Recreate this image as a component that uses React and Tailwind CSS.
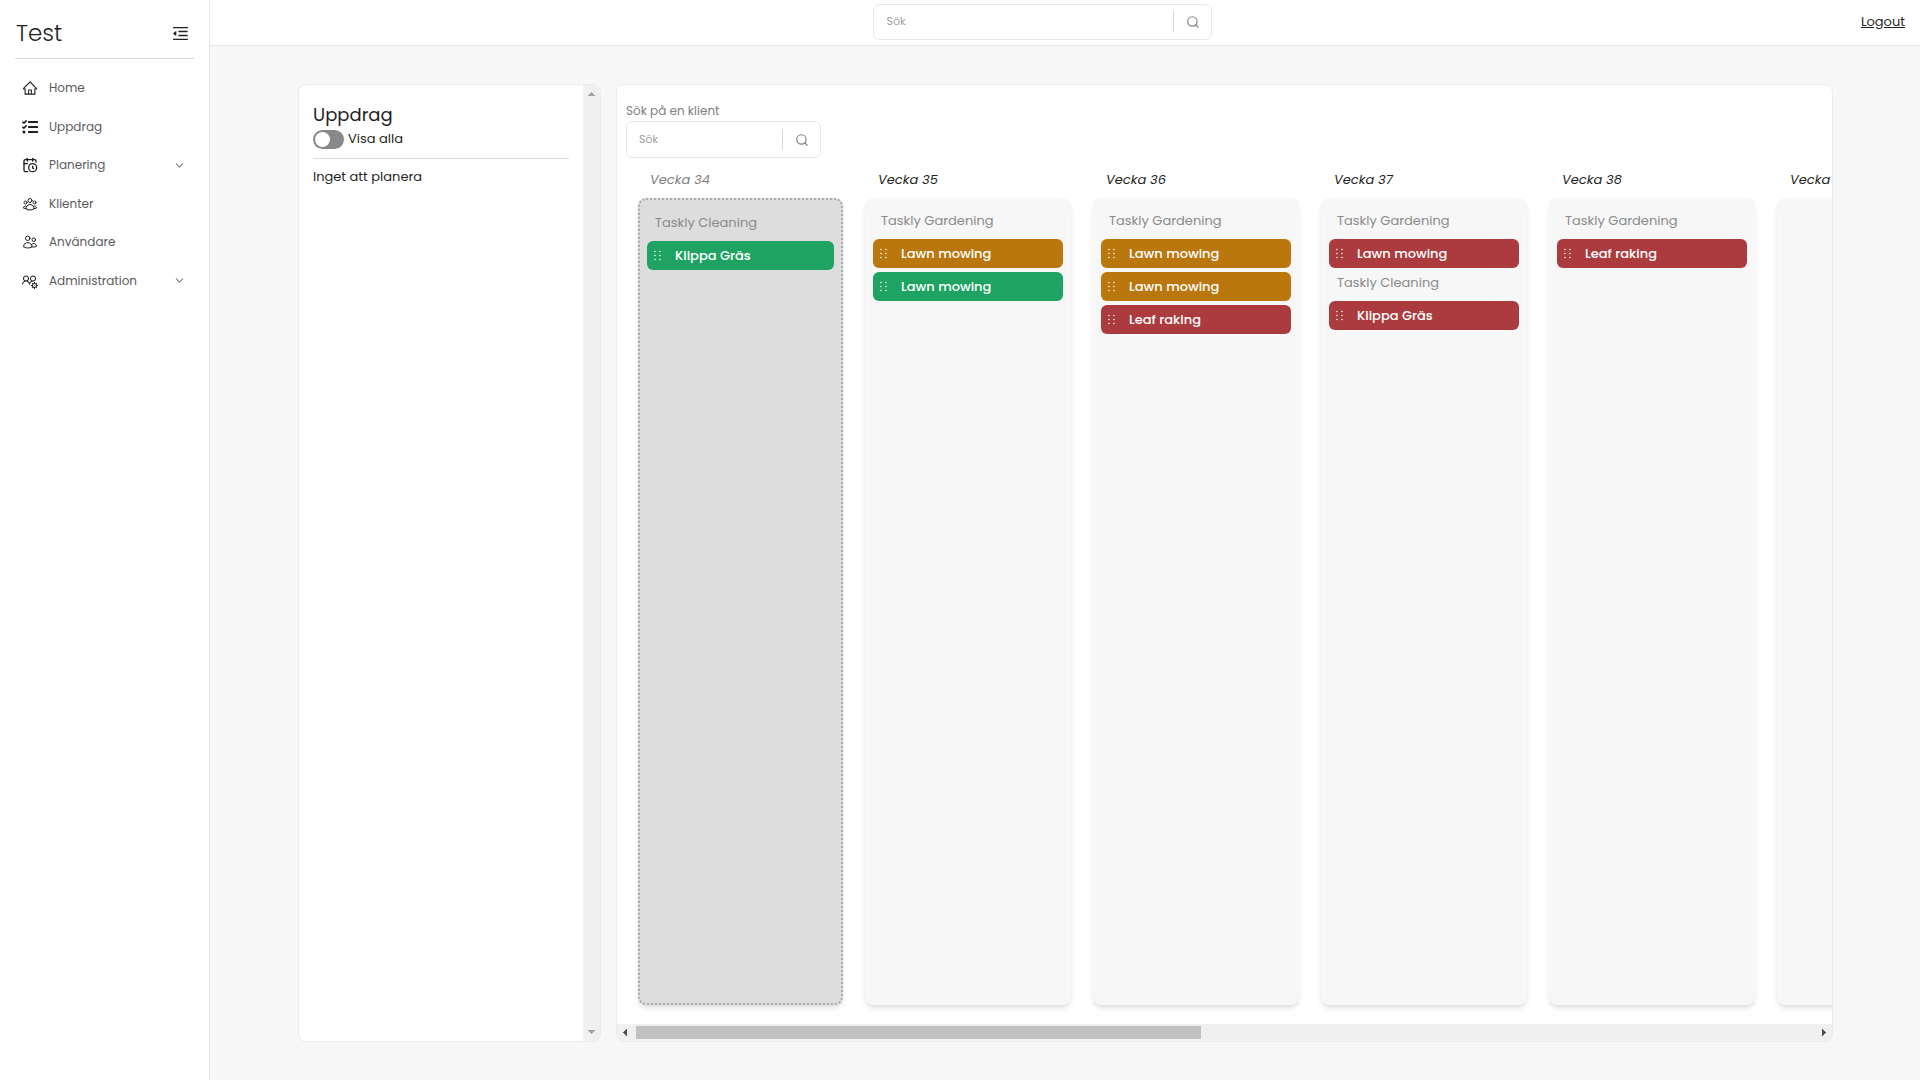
import { useState } from 'react';
import { AiOutlineHome, AiOutlineMenuFold } from 'react-icons/ai';
import { FaTasks } from 'react-icons/fa';
import { HiOutlineUserGroup, HiOutlineUsers } from 'react-icons/hi2';
import { LiaUsersCogSolid } from 'react-icons/lia';
import { LuCalendarClock } from 'react-icons/lu';
import { FiChevronDown, FiSearch } from 'react-icons/fi';
import clsx from 'clsx';

const links = [
  { label: 'Home', icon: AiOutlineHome },
  { label: 'Uppdrag', icon: FaTasks },
  { label: 'Planering', icon: LuCalendarClock, sub: true },
  { label: 'Klienter', icon: HiOutlineUserGroup },
  { label: 'Användare', icon: HiOutlineUsers },
  { label: 'Administration', icon: LiaUsersCogSolid, sub: true },
];

const colors = {
  green: 'bg-[#1ea362]',
  amber: 'bg-[#b9770e]',
  red: 'bg-[#ab3b3e]',
};

const weeks = [
  {
    week: 34,
    past: true,
    groups: [{ team: 'Taskly Cleaning', tasks: [{ name: 'Klippa Gräs', color: 'green' }] }],
  },
  {
    week: 35,
    groups: [
      {
        team: 'Taskly Gardening',
        tasks: [
          { name: 'Lawn mowing', color: 'amber' },
          { name: 'Lawn mowing', color: 'green' },
        ],
      },
    ],
  },
  {
    week: 36,
    groups: [
      {
        team: 'Taskly Gardening',
        tasks: [
          { name: 'Lawn mowing', color: 'amber' },
          { name: 'Lawn mowing', color: 'amber' },
          { name: 'Leaf raking', color: 'red' },
        ],
      },
    ],
  },
  {
    week: 37,
    groups: [
      { team: 'Taskly Gardening', tasks: [{ name: 'Lawn mowing', color: 'red' }] },
      { team: 'Taskly Cleaning', tasks: [{ name: 'Klippa Gräs', color: 'red' }] },
    ],
  },
  {
    week: 38,
    groups: [{ team: 'Taskly Gardening', tasks: [{ name: 'Leaf raking', color: 'red' }] }],
  },
  { week: 39, groups: [] },
];

function SearchBox({ id, className }) {
  return (
    <form
      role="search"
      onSubmit={(e) => e.preventDefault()}
      className={clsx('flex items-center rounded-md border border-[#e8e8e8] bg-white pl-3', className)}
    >
      <input
        id={id}
        aria-label="Sök"
        placeholder="Sök"
        className="w-full min-w-0 flex-1 text-[11px] outline-none placeholder:text-[#a0a0a0]"
      />
      <button
        aria-label="Sök"
        className="flex h-[21px] w-[38px] items-center justify-center border-l border-[#d9d9d9] text-[#808080]"
      >
        <FiSearch size={14} />
      </button>
    </form>
  );
}

function Sidebar() {
  return (
    <aside className="w-[210px] shrink-0 border-r border-[#e8e8e8] bg-white px-[15px]">
      <div className="flex h-[59px] items-center justify-between border-b border-[#d9d9d9] pt-2 pr-1 pl-px">
        <h1 className="text-[23px] font-light">Test</h1>
        <button aria-label="Fäll ihop menyn">
          <AiOutlineMenuFold size={19} />
        </button>
      </div>
      <nav className="mt-[10px] flex h-[231px] flex-col justify-between">
        {links.map((l) => (
          <a key={l.label} href="#" className="flex h-[38px] items-center pr-2 pl-[7px] text-[12px] text-[#5c5c5c]">
            <l.icon size={16} className="mr-[11px] text-[#1f1f1f]" />
            <span className="flex-1">{l.label}</span>
            {l.sub && <FiChevronDown size={13} className="text-[#808080]" />}
          </a>
        ))}
      </nav>
    </aside>
  );
}

function Task({ task }) {
  return (
    <li
      className={clsx(
        'mb-1 flex h-[29px] items-center rounded-md pl-[7px] text-[13px] font-medium text-white',
        colors[task.color]
      )}
    >
      {/* Drag handle */}
      <svg width="7" height="11" viewBox="0 0 7 11" fill="currentColor" className="mr-[14px]">
        {[1.5, 5.5, 9.5].map((y) => (
          <g key={y}>
            <circle cx="0.9" cy={y} r="0.8" />
            <circle cx="5.9" cy={y} r="0.8" />
          </g>
        ))}
      </svg>
      {task.name}
    </li>
  );
}

function Week({ data }) {
  return (
    <section className={clsx('flex w-[206px] shrink-0 flex-col', data.past ? 'text-[#808080]' : 'text-[#1f1f1f]')}>
      <h3 className="h-[38px] pt-[10px] pl-[13px] text-[13px] leading-5 italic">Vecka {data.week}</h3>
      <div
        className={clsx(
          'flex-1 rounded-lg pt-3 shadow-md',
          data.past ? 'ml-px border-2 border-dotted border-[#aaaaaa] bg-[#dddddd] px-[7px]' : 'bg-[#f7f7f7] px-2'
        )}
      >
        {data.groups.map((g) => (
          <div key={g.team}>
            <h4 className="h-[29px] pt-px pl-2 text-[13px] leading-5 text-[#8a8a8a]">{g.team}</h4>
            <ul>
              {g.tasks.map((task, i) => (
                <Task key={i} task={task} />
              ))}
            </ul>
          </div>
        ))}
      </div>
    </section>
  );
}

function Assignments() {
  const [showAll, setShowAll] = useState(false);

  return (
    <section className="flex w-[303px] shrink-0 overflow-hidden rounded-lg border border-[#ebebeb] bg-white">
      <div className="flex-1 px-[14px] pt-[18px]">
        <h2 className="text-[18px] leading-6">Uppdrag</h2>
        <label className="flex h-8 items-start gap-1 border-b border-[#d9d9d9] pt-px text-[13px] leading-[22px]">
          <input
            type="checkbox"
            checked={showAll}
            onChange={(e) => setShowAll(e.target.checked)}
            className="mt-[2px] h-[19px] w-[31px] appearance-none rounded-full bg-[#888888] p-[2px] before:block before:size-[15px] before:rounded-full before:bg-white checked:bg-[#1ea362] checked:before:ml-3"
          />
          Visa alla
        </label>
        <p className="mt-2 text-[13px] leading-5">Inget att planera</p>
      </div>
      <div className="flex w-[17px] flex-col items-center justify-between bg-[#f0f0f0] py-[7px] text-[#a3a3a3]">
        <svg width="7" height="4" viewBox="0 0 7 4" fill="currentColor">
          <path d="M3 0h1v1h1v1h1v1h1v1H0V3h1V2h1V1h1z" />
        </svg>
        <svg width="7" height="4" viewBox="0 0 7 4" fill="currentColor">
          <path d="M0 0h7v1H6v1H5v1H4v1H3V3H2V2H1V1H0z" />
        </svg>
      </div>
    </section>
  );
}

function Planner() {
  return (
    <section className="flex min-w-0 flex-1 flex-col overflow-hidden rounded-lg border border-[#ebebeb] bg-white">
      <div className="px-[9px] pt-4">
        <label htmlFor="client-search" className="block text-[12px] leading-5 text-[#808080]">
          Sök på en klient
        </label>
        <SearchBox id="client-search" className="h-[37px] w-[195px]" />
      </div>
      <div className="mt-[2px] flex flex-1 gap-[22px] overflow-hidden pb-[19px] pl-5">
        {weeks.map((w) => (
          <Week key={w.week} data={w} />
        ))}
      </div>
      <div className="flex h-[17px] items-center justify-between gap-[9px] bg-[#f0f0f0] px-[6px] text-[#505050]">
        <svg width="4" height="7" viewBox="0 0 4 7" fill="currentColor">
          <path d="M4 0v7H3V6H2V5H1V4H0V3h1V2h1V1h1V0z" />
        </svg>
        <div className="flex-1">
          <div className="h-[13px] w-[48%] bg-[#c1c1c1]" />
        </div>
        <svg width="4" height="7" viewBox="0 0 4 7" fill="currentColor">
          <path d="M0 0h1v1h1v1h1v1h1v1H3v1H2v1H1v1H0z" />
        </svg>
      </div>
    </section>
  );
}

export default function App() {
  return (
    <div className="flex min-h-screen bg-[#f7f7f7] font-[Poppins,Lato,sans-serif] text-[#1f1f1f]">
      <Sidebar />
      <div className="flex min-w-0 flex-1 flex-col">
        <header className="flex h-[46px] items-center justify-between border-b border-[#e8e8e8] bg-white px-[15px] pb-[2px]">
          <div />
          <SearchBox id="search" className="h-9 w-[339px]" />
          <a href="#" className="text-[13px] underline">
            Logout
          </a>
        </header>
        <main className="flex flex-1 gap-[15px] py-[38px] pr-[87px] pl-[88px]">
          <Assignments />
          <Planner />
        </main>
      </div>
    </div>
  );
}
